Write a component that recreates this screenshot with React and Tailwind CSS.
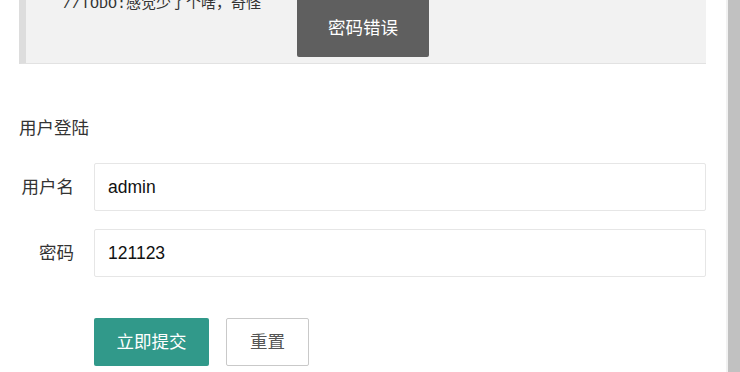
import React from "react";

const sans = { fontFamily: '"Liberation Sans", Arial, "Noto Sans CJK SC", sans-serif' };
const mono = { fontFamily: '"Liberation Mono", "Courier New", "Noto Sans CJK SC", monospace' };

function FormRow({ label, value }) {
  return (
    <div className="flex items-center">
      <label className="w-[75px] shrink-0 pr-[20px] text-right text-[17.5px] text-[#333]">
        {label}
      </label>
      <input
        readOnly
        value={value}
        className="h-[48px] flex-1 rounded-[2px] border border-[#e6e6e6] bg-white pl-[13px] text-[17.5px] text-[#111] outline-none"
        style={sans}
      />
    </div>
  );
}

export default function App() {
  return (
    <div className="relative flex h-[372px] w-[740px] overflow-hidden bg-white" style={sans}>
      <main className="flex-1 pl-[19px] pr-[20px]">
        {/* code block, scrolled partly out of view */}
        <div className="h-[64px] overflow-hidden border-b border-l-[7px] border-[#e2e2e2] border-l-[#dddddd] bg-[#f2f2f2]">
          <div className="-mt-[5px] pl-[37px] text-[15px] leading-[20px] text-[#333]" style={mono}>
            //TODO:感觉少了个啥，奇怪
          </div>
        </div>

        <div className="mt-[52px] h-[24px] text-[17.5px] leading-[24px] text-[#333]">用户登陆</div>

        <form className="mt-[23px] flex flex-col gap-[18px]">
          <FormRow label="用户名" value="admin" />
          <FormRow label="密码" value="121123" />
        </form>

        <div className="mt-[41px] flex gap-[17px] pl-[75px]">
          <button className="h-[48px] w-[115px] rounded-[2px] bg-[#31998a] text-[17.5px] text-white">
            立即提交
          </button>
          <button className="h-[48px] w-[83px] rounded-[2px] border border-[#c9c9c9] bg-white text-[17.5px] text-[#555]">
            重置
          </button>
        </div>
      </main>

      {/* scrollbar */}
      <div className="w-[14px] shrink-0 border-l-2 border-[#f1f1f1] bg-[#c1c1c1]" />

      {/* message popup */}
      <div className="absolute left-[297px] top-0 flex h-[57px] w-[132px] items-center justify-center rounded-b-[2px] bg-[#5f5f5f] text-[17.5px] text-white">
        密码错误
      </div>
    </div>
  );
}
